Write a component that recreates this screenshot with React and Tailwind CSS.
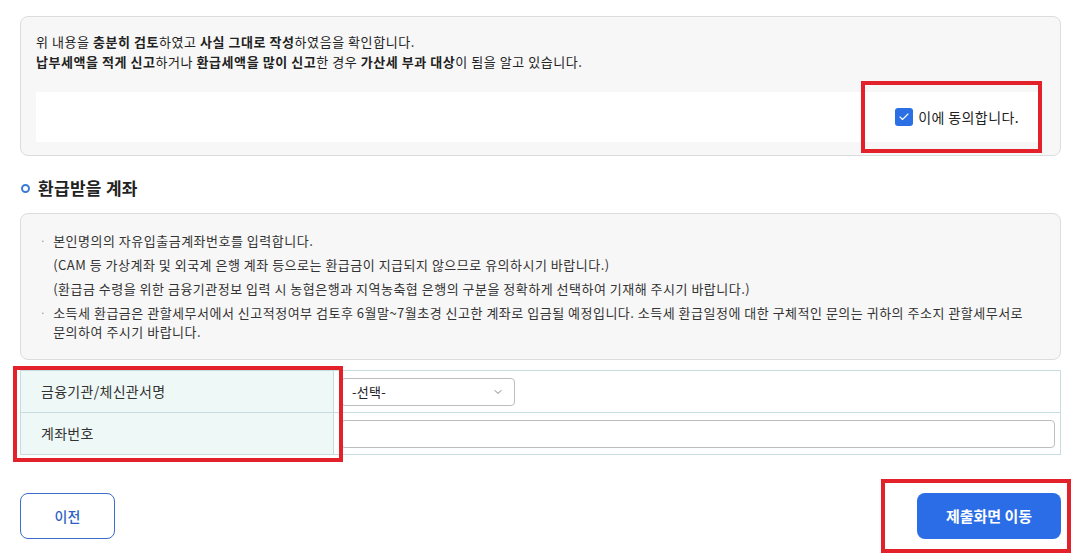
import React from "react";
import { ChevronDown, Check } from "lucide-react";

const notices = [
  ["본인명의의 자유입출금계좌번호를 입력합니다.", "(CAM 등 가상계좌 및 외국계 은행 계좌 등으로는 환급금이 지급되지 않으므로 유의하시기 바랍니다.)", "(환급금 수령을 위한 금융기관정보 입력 시 농협은행과 지역농축협 은행의 구분을 정확하게 선택하여 기재해 주시기 바랍니다.)"],
  ["소득세 환급금은 관할세무서에서 신고적정여부 검토후 6월말~7월초경 신고한 계좌로 입금될 예정입니다. 소득세 환급일정에 대한 구체적인 문의는 귀하의 주소지 관할세무서로 문의하여 주시기 바랍니다."],
];

export default function App() {
  return (
    <div
      className="relative w-[1076px] h-[559px] bg-white pl-[20px] pr-[15px] pt-[16px] text-[#222]"
      style={{ fontFamily: '"Noto Sans CJK KR", "Noto Sans", sans-serif' }}
    >
      {/* 동의 박스 */}
      <div className="h-[140px] rounded-[8px] border border-[#dcdcdc] bg-[#f7f7f7] px-[15px] pt-[15px]">
        <p className="text-[13px] leading-[20px] tracking-[0.55px]">
          위 내용을 <b>충분히 검토</b>하였고 <b>사실 그대로 작성</b>하였음을 확인합니다.
        </p>
        <p className="text-[13px] leading-[20px] tracking-[0.55px]">
          <b>납부세액을 적게 신고</b>하거나 <b>환급세액을 많이 신고</b>한 경우 <b>가산세 부과 대상</b>이 됨을 알고 있습니다.
        </p>
        <div className="mt-[20px] h-[50px] mr-[4px] bg-white flex items-center justify-end pr-[22px]">
          <label className="flex items-center gap-[5px] text-[14px] tracking-[0.4px]">
            <span className="w-[18px] h-[18px] rounded-[3px] bg-[#2a6fe3] flex items-center justify-center">
              <Check size={12} strokeWidth={2.2} color="#fff" />
            </span>
            이에 동의합니다.
          </label>
        </div>
      </div>

      {/* 환급받을 계좌 */}
      <div className="mt-[20px] flex items-center gap-[8px] pl-[1px]">
        <span className="w-[9px] h-[9px] rounded-full border-2 border-[#3d7bd9]" />
        <h3 className="text-[17px] font-bold leading-[24px] tracking-[0.3px]">환급받을 계좌</h3>
      </div>

      <div className="mt-[13px] rounded-[8px] border border-[#dcdcdc] bg-[#f7f7f7] pl-[19px] pr-[20px] pt-[17px] pb-[18px] text-[13px] leading-[19px] tracking-[0.5px] text-[#333] break-keep">
        {notices.map((group, i) => (
          <div key={i} className="flex gap-[7px] mb-[5px] last:mb-0">
            <span className="text-[#999] text-[10px] leading-[19px]">·</span>
            <div className="flex flex-col gap-[5px]">
              {group.map((line, j) => (
                <p key={j}>{line}</p>
              ))}
            </div>
          </div>
        ))}
      </div>

      {/* 계좌 입력 테이블 */}
      <table className="mt-[10px] w-full border-collapse border border-[#c6dde0] text-[14px] tracking-[0.3px]">
        <tbody>
          <tr className="h-[42px]">
            <th className="w-[313px] border border-[#c6dde0] bg-[#eef8f7] pl-[20px] text-left font-normal text-[#333]">
              금융기관/체신관서명
            </th>
            <td className="border border-[#c6dde0] px-[7px]">
              <div className="w-[174px] h-[28px] rounded-[4px] border border-[#bdbdbd] flex items-center justify-between pl-[10px] pr-[10px] text-[13px]">
                -선택-
                <ChevronDown size={12} strokeWidth={1.5} color="#555" />
              </div>
            </td>
          </tr>
          <tr className="h-[42px]">
            <th className="border border-[#c6dde0] bg-[#eef8f7] pl-[20px] text-left font-normal text-[#333]">
              계좌번호
            </th>
            <td className="border border-[#c6dde0] pl-[7px] pr-[5px]">
              <input className="w-full h-[28px] rounded-[4px] border border-[#bdbdbd] outline-none px-[8px]" />
            </td>
          </tr>
        </tbody>
      </table>

      {/* 버튼 */}
      <div className="mt-[38px] flex justify-between">
        <button className="w-[95px] h-[46px] rounded-[8px] border border-[#3b6fc9] text-[#2d62c4] text-[14px] font-medium">
          이전
        </button>
        <button className="w-[144px] h-[46px] rounded-[8px] bg-[#2b6de6] text-white text-[15px] font-bold">
          제출화면 이동
        </button>
      </div>

      {/* 강조 표시 */}
      <div className="absolute left-[861px] top-[81px] w-[181px] h-[72px] border-[4px] border-[#e3212b]" />
      <div className="absolute left-[13px] top-[366px] w-[330px] h-[96px] border-[4px] border-[#e3212b]" />
      <div className="absolute left-[881px] top-[479px] w-[190px] h-[74px] border-[4px] border-[#e3212b]" />
    </div>
  );
}
